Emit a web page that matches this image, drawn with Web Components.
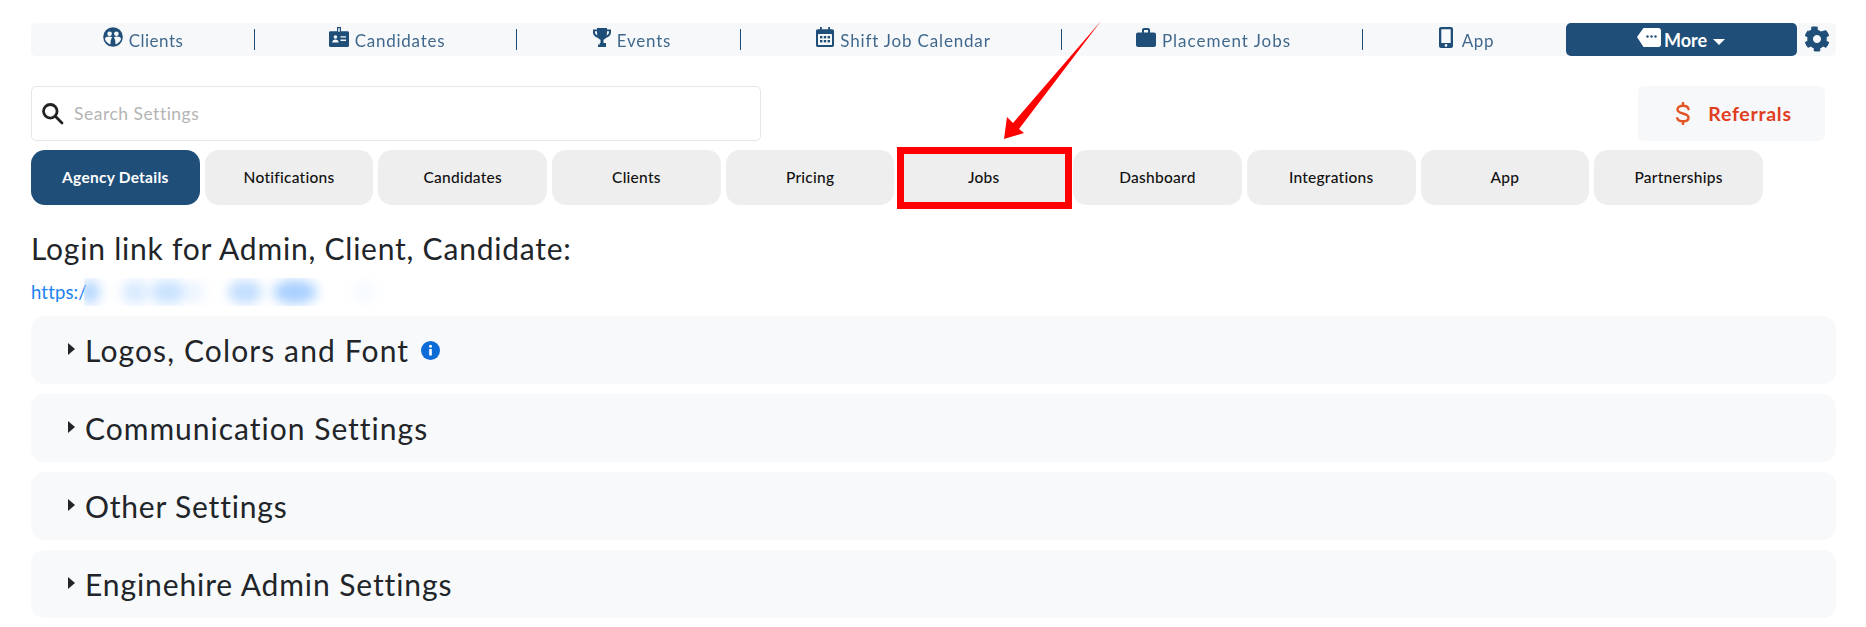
<!DOCTYPE html>
<html lang="en"><head><meta charset="utf-8"><title>Settings</title>
<style>
html,body{margin:0;padding:0;background:#fff}
body{font-family:"Lato","Open Sans",sans-serif;color:#212529}
</style></head><body>
<eh-page>
  <eh-nav>
    <eh-nav-item icon="users" style="--w:224px;--ls:.5px">Clients</eh-nav-item>
    <eh-nav-item icon="badge" style="--w:262px;--ls:.75px;--pl:2px">Candidates</eh-nav-item>
    <eh-nav-item icon="trophy" style="--w:224px;--ls:.75px;--pl:6px">Events</eh-nav-item>
    <eh-nav-item icon="calendar" style="--w:321px;--ls:.83px;--pl:4px">Shift Job Calendar</eh-nav-item>
    <eh-nav-item icon="briefcase" style="--w:301px;--ls:1px;--pl:2px">Placement Jobs</eh-nav-item>
    <eh-nav-item icon="mobile" style="--w:203px;--ls:.7px;--gap:9px;--pl:4px" last>App</eh-nav-item>
    <eh-more>More</eh-more>
    <eh-gear></eh-gear>
  </eh-nav>
  <eh-toolbar>
    <eh-search placeholder="Search Settings"></eh-search>
    <eh-referrals>Referrals</eh-referrals>
  </eh-toolbar>
  <eh-tabs>
    <eh-tab active>Agency Details</eh-tab>
    <eh-tab>Notifications</eh-tab>
    <eh-tab>Candidates</eh-tab>
    <eh-tab>Clients</eh-tab>
    <eh-tab>Pricing</eh-tab>
    <eh-tab>Jobs</eh-tab>
    <eh-tab>Dashboard</eh-tab>
    <eh-tab>Integrations</eh-tab>
    <eh-tab>App</eh-tab>
    <eh-tab>Partnerships</eh-tab>
  </eh-tabs>
  <eh-login></eh-login>
  <eh-accordion info style="--ls:1.12px">Logos, Colors and Font</eh-accordion>
  <eh-accordion style="--ls:1px">Communication Settings</eh-accordion>
  <eh-accordion style="--ls:.8px">Other Settings</eh-accordion>
  <eh-accordion style="--ls:.9px">Enginehire Admin Settings</eh-accordion>
  <eh-annotation></eh-annotation>
</eh-page>
<script>
const COG='M487.4 315.7l-42.6-24.6c4.3-23.2 4.3-47 0-70.2l42.6-24.6c4.9-2.8 7.1-8.6 5.5-14-11.1-35.6-30-67.8-54.7-94.6-3.8-4.1-10-5.1-14.8-2.3L330.8 110c-17.9-15.4-38.5-27.3-60.8-35.1V25.8c0-5.6-3.9-10.5-9.4-11.7-36.7-8.2-74.3-7.8-109.2 0-5.5 1.2-9.4 6.1-9.4 11.7V75c-22.2 7.9-42.8 19.8-60.8 35.1L88.7 85.5c-4.9-2.8-11-1.9-14.8 2.3-24.7 26.7-43.6 58.9-54.7 94.6-1.7 5.4.6 11.2 5.5 14L67.3 221c-4.3 23.2-4.3 47 0 70.2l-42.6 24.6c-4.9 2.8-7.1 8.6-5.5 14 11.1 35.6 30 67.8 54.7 94.6 3.8 4.1 10 5.1 14.8 2.3l42.6-24.6c17.9 15.4 38.5 27.3 60.8 35.1v49.2c0 5.6 3.9 10.5 9.4 11.7 36.7 8.2 74.3 7.8 109.2 0 5.5-1.2 9.4-6.1 9.4-11.7v-49.2c22.2-7.9 42.8-19.8 60.8-35.1l42.6 24.6c4.9 2.8 11 1.9 14.8-2.3 24.7-26.7 43.6-58.9 54.7-94.6 1.5-5.5-.7-11.3-5.6-14.1zM256 336c-44.1 0-80-35.9-80-80s35.9-80 80-80 80 35.9 80 80-35.9 80-80 80z';
const ICONS={
users:`<svg width="20" height="20" viewBox="0 0 20 20"><circle cx="10" cy="10" r="9.8" fill="currentColor"/><circle cx="6.600" cy="6.800" r="2.300" fill="#f7f8fa"/><circle cx="13.400" cy="6.800" r="2.300" fill="#f7f8fa"/><path d="M1.900 11.800c.5-1.500 1.900-2.200 4.300-2.200 1.300 0 2.300.3 3 .9-1.100 1.200-1.700 3-1.700 6.900-2.700-.8-4.900-2.800-5.600-5.600zM18.100 11.800c-.5-1.500-1.900-2.200-4.300-2.200-1.300 0-2.300.3-3 .9 1.100 1.200 1.700 3 1.700 6.900 2.700-.8 4.900-2.800 5.600-5.600z" fill="#f7f8fa"/></svg>`,
badge:`<svg width="20" height="20" viewBox="0 0 20 20"><path d="M8 0h4v4.200h6.600c.8 0 1.400.6 1.400 1.400v12.900c0 .8-.6 1.500-1.400 1.500H1.400C.6 20 0 19.300 0 18.500V5.600c0-.8.6-1.400 1.400-1.400H8z" fill="currentColor"/><rect x="9.200" y="1.200" width="1.600" height="3.600" fill="#f7f8fa"/><circle cx="6.400" cy="10" r="1.800" fill="#f7f8fa"/><path d="M3.200 15.500c0-1.900 1.400-3 3.200-3s3.200 1.100 3.200 3z" fill="#f7f8fa"/><path d="M11.500 9.200h5.500v1.300h-5.500zM11.500 12.600h5.500v1.300h-5.500z" fill="#f7f8fa"/></svg>`,
trophy:`<svg width="18" height="19" viewBox="0 0 18 19"><path d="M4 0h10v1.500h4v2.800c0 2.800-2.300 5-4.800 5.500-.8 1.100-1.700 1.700-2.700 2V15h2.500v1.500H13V19H5v-2.500h1.800V15h0.700v-3.200c-1-.3-1.900-.9-2.700-2C2.300 9.300 0 7.100 0 4.300V1.500h4zM2 3.300v1c0 1.300 1 2.500 2.300 3.100-.2-1.200-.3-2.600-.3-4.100zm14 0h-2c0 1.500-.1 2.900-.3 4.100C15 6.800 16 5.600 16 4.300z" fill="currentColor" fill-rule="evenodd"/></svg>`,
calendar:`<svg width="18" height="20" viewBox="0 0 18 20"><path d="M4 0h1.800v2.200h6.400V0H14v2.200h2.300c.9 0 1.700.8 1.700 1.700v14.400c0 .9-.8 1.700-1.700 1.700H1.700C.8 20 0 19.200 0 18.300V3.900c0-.9.8-1.700 1.700-1.700H4z" fill="currentColor"/><rect x="2" y="7" width="14" height="11" rx=".5" fill="#f7f8fa"/><g fill="currentColor"><rect x="4" y="9" width="2.400" height="2.400"/><rect x="7.800" y="9" width="2.400" height="2.400"/><rect x="11.600" y="9" width="2.400" height="2.400"/><rect x="4" y="13" width="2.400" height="2.400"/><rect x="7.800" y="13" width="2.400" height="2.400"/><rect x="11.600" y="13" width="2.400" height="2.400"/></g></svg>`,
briefcase:`<svg width="20" height="19" viewBox="0 0 20 19"><path d="M6 4.500V2c0-1.100.9-2 2-2h4c1.100 0 2 .9 2 2v2.500h4c1.100 0 2 .9 2 2V17c0 1.100-.9 2-2 2H2c-1.100 0-2-.9-2-2V6.500c0-1.100.9-2 2-2zm2-2.500v2.500h4V2z" fill="currentColor" fill-rule="evenodd"/></svg>`,
mobile:`<svg width="14" height="21" viewBox="0 0 14 21"><path d="M2 0h10c1.100 0 2 .9 2 2v17c0 1.100-.9 2-2 2H2c-1.100 0-2-.9-2-2V2C0 .9.9 0 2 0zm.3 2.200v13.700h9.400V2.200z" fill="currentColor" fill-rule="evenodd"/><circle cx="7" cy="18.400" r="1.300" fill="#f7f8fa"/></svg>`
};
function def(name,css,html){
  customElements.define(name,class extends HTMLElement{
    constructor(){super();const r=this.attachShadow({mode:'open'});
      r.innerHTML=`<style>${css}</style>`+(typeof html==='function'?html(this):html);}
  });
}
def('eh-page',`:host{display:block;position:relative;width:1866px;height:627px;box-sizing:border-box;padding:23px 30px 0 31px;overflow:hidden;font-family:"Lato","Open Sans",sans-serif}`,`<slot></slot>`);
def('eh-nav',`:host{display:flex;height:33px;width:1805px;background:#f7f8fa;border-radius:5px}`,`<slot></slot>`);
def('eh-nav-item',`:host{display:flex;box-sizing:border-box;width:var(--w);height:33px;align-items:center;justify-content:center;gap:var(--gap,6px);position:relative;color:#1f4e79;font-size:17px;font-weight:400;letter-spacing:var(--ls);padding:1px 0 0 var(--pl,0)}
 :host::after{content:"";position:absolute;right:0;top:6px;height:21px;width:1.4px;background:#1f4e79}
 :host([last])::after{display:none}
 .i{display:flex;margin-bottom:6px}.t{opacity:.85}`,
 el=>`<span class="i">${ICONS[el.getAttribute('icon')]}</span><span class="t"><slot></slot></span>`);
def('eh-more',`:host{display:flex;width:231px;height:33px;box-sizing:border-box;background:#1f4e79;border-radius:5px;color:#fff;align-items:center;justify-content:center;gap:5px;font-size:18px;font-weight:700;padding:0 3px 0 2px}
 svg{display:block}.tag{margin:0 -2px 5px 0}.car{margin:5px 0 0 1px}`,
 `<svg class="tag" width="24" height="19" viewBox="0 0 24 19"><path d="M6.500 0H21.500C22.900 0 24 1.100 24 2.500v14c0 1.400-1.100 2.500-2.500 2.500H6.500L0 9z" fill="#fff"/><circle cx="10.500" cy="8.500" r="1.200" fill="#1f4e79"/><circle cx="14.500" cy="8.500" r="1.200" fill="#1f4e79"/><circle cx="18.500" cy="8.500" r="1.200" fill="#1f4e79"/></svg><slot></slot><svg class="car" width="12" height="6" viewBox="0 0 12 6"><path d="M0 0h12L6 6z" fill="#fff"/></svg>`);
def('eh-gear',`:host{display:flex;flex:1;align-items:center;padding-left:7px}svg{display:block;margin-top:-1px}`,
 `<svg width="26" height="26" viewBox="0 0 512 512"><path d="${COG}" fill="#1f4e79"/></svg>`);
def('eh-toolbar',`:host{display:flex;justify-content:space-between;width:1794px;margin-top:30px}`,`<slot></slot>`);
def('eh-search',`:host{display:flex;align-items:center;box-sizing:border-box;width:730px;height:55px;border:1.5px solid #e6e6e6;border-radius:5px;background:#fff;padding-left:9px;gap:10px}
 input{border:0;outline:0;background:transparent;flex:1;font:400 17.5px "Lato","Open Sans",sans-serif;letter-spacing:.5px;padding:0;color:#333}
 input::placeholder{color:#b4b4b4;opacity:1}`,
 el=>`<svg width="23" height="23" viewBox="0 0 23 23" fill="none" stroke="#222" stroke-width="2.800"><circle cx="9.300" cy="9.300" r="6.800"/><path d="M14.300 14.300L21 21" stroke-linecap="round"/></svg><input placeholder="${el.getAttribute('placeholder')}">`);
def('eh-referrals',`:host{display:flex;align-items:center;justify-content:center;gap:18px;box-sizing:border-box;width:187px;height:55px;background:#f7f8fa;border-radius:6px;color:#e03e1f;font-size:19.5px;font-weight:700;letter-spacing:.7px;padding-left:5px}svg{display:block}`,
 `<svg width="14" height="23" viewBox="0 0 14 23" fill="none" stroke="#e25527" stroke-width="2.500" stroke-linecap="round"><path d="M12.500 7C12 4.800 10 3.800 7 3.800 3.800 3.800 1.500 5.300 1.500 7.500c0 5.300 11 2.800 11 8.200 0 2.200-2.300 3.600-5.500 3.600-3 0-5.200-1-5.700-3M7 1v2.800M7 19.300V22"/></svg><span><slot></slot></span>`);
def('eh-tabs',`:host{display:flex;gap:5px;margin-top:9px;height:55px}`,`<slot></slot>`);
def('eh-tab',`:host{display:flex;box-sizing:border-box;width:168.7px;height:55px;flex:none;align-items:center;justify-content:center;background:#eee;border-radius:14px;color:#111;font-size:15.5px;font-weight:500;letter-spacing:.25px;padding-bottom:2px}
 :host([active]){background:#1f4e79;color:#fff;font-weight:700}`,`<slot></slot>`);
def('eh-login',`:host{display:block;height:111px;box-sizing:border-box;padding-top:25px}
 h2{margin:0;font-size:30px;font-weight:400;line-height:36px;color:#212529;letter-spacing:.78px}
 .link{display:flex;margin-top:12px;height:28px;align-items:center;font-size:18.5px;color:#1a82f0;letter-spacing:.15px}
 .u{display:block;white-space:nowrap;flex:none;width:53px}
 .b{display:flex;align-items:center;width:302px;height:28px;overflow:hidden;background:transparent}
 .b i{display:block;height:24px;border-radius:50%;background:#a8d0ff;filter:blur(6px);flex:none}`,
 `<h2>Login link for Admin, Client, Candidate:</h2><div class="link"><span class="u">https:/</span><span class="b"><i style="width:20px;margin-left:-4px;opacity:.85"></i><i style="width:26px;margin-left:22px;opacity:.45"></i><i style="width:36px;margin-left:2px;opacity:.6"></i><i style="width:20px;margin-left:-1px;opacity:.2"></i><i style="width:34px;margin-left:23px;opacity:.7"></i><i style="width:44px;margin-left:11px"></i><i style="width:24px;margin-left:36px;opacity:.1"></i></span></div>`);
def('eh-accordion',`:host{display:flex;align-items:center;box-sizing:border-box;width:1805px;height:68px;margin-bottom:10px;background:#f8f9fa;border-radius:13px;padding-left:37px;color:#212529;font-size:30px;font-weight:400;letter-spacing:var(--ls,1px)}
 .a{width:0;height:0;border-left:7px solid #212529;border-top:6px solid transparent;border-bottom:6px solid transparent;margin:0 10px 3px 0}
 .info{display:none;margin:0 0 0 12px}
 :host([info]) .info{display:block}`,
 `<span class="a"></span><span><slot></slot></span><svg class="info" width="19" height="19" viewBox="0 0 19 19"><circle cx="9.500" cy="9.500" r="9.500" fill="#0d6bd8"/><rect x="8.200" y="8" width="2.600" height="6.500" rx=".5" fill="#fff"/><circle cx="9.500" cy="5.300" r="1.500" fill="#fff"/></svg>`);
def('eh-annotation',`:host{position:absolute;inset:0;pointer-events:none;display:block}svg{display:block}`,
 `<svg width="1866" height="627" viewBox="0 0 1866 627"><rect x="900.500" y="150.500" width="168" height="55" fill="none" stroke="#f00" stroke-width="7"/><path d="M1101 21L1019 129L1024 133L1004 139L1007 117L1013 123Z" fill="#f00"/></svg>`);
</script>
</body></html>
